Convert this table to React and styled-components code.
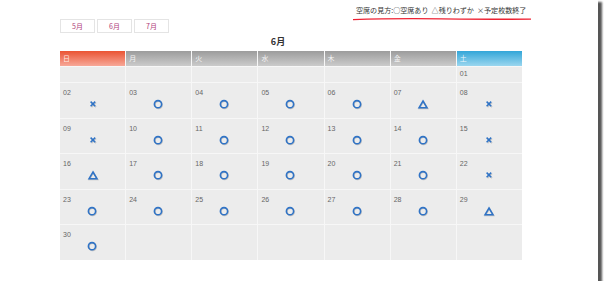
import React from 'react';
import styled, { createGlobalStyle } from 'styled-components';

const GlobalStyle = createGlobalStyle`
  html, body { margin: 0; padding: 0; background: #fff; }
  body { font-family: "Liberation Sans", "Noto Sans CJK JP", sans-serif; }
`;

// データ
const HEADERS = [
  { label: '日', kind: 'sun' },
  { label: '月', kind: 'week' },
  { label: '火', kind: 'week' },
  { label: '水', kind: 'week' },
  { label: '木', kind: 'week' },
  { label: '金', kind: 'week' },
  { label: '土', kind: 'sat' },
];

const STATUS = {
  1: null, 2: 'x', 3: 'o', 4: 'o', 5: 'o', 6: 'o', 7: 't', 8: 'x',
  9: 'x', 10: 'o', 11: 'o', 12: 'o', 13: 'o', 14: 'o', 15: 'x',
  16: 't', 17: 'o', 18: 'o', 19: 'o', 20: 'o', 21: 'o', 22: 'x',
  23: 'o', 24: 'o', 25: 'o', 26: 'o', 27: 'o', 28: 'o', 29: 't',
  30: 'o',
};

const buildCells = () => {
  const cells = [];
  for (let i = 0; i < 6; i++) cells.push(null);
  for (let d = 1; d <= 30; d++) cells.push(d);
  while (cells.length % 7) cells.push(null);
  return cells;
};

const Mark = ({ type }) => {
  if (type === 'o') {
    return (
      <svg width="11" height="11" viewBox="0 0 11 11">
        <circle cx="5.6" cy="5.8" r="3.6" fill="none" stroke="rgba(0,0,0,0.18)" strokeWidth="1.6" />
        <circle cx="5" cy="5.2" r="3.6" fill="none" stroke="#2f73c6" strokeWidth="1.6" />
      </svg>
    );
  }
  if (type === 't') {
    return (
      <svg width="12" height="11" viewBox="0 0 12 11">
        <path d="M6.5 2.6 L10.6 9.4 L2.4 9.4 Z" fill="none" stroke="rgba(0,0,0,0.18)" strokeWidth="1.5" />
        <path d="M6 2 L10 8.8 L2 8.8 Z" fill="none" stroke="#2f73c6" strokeWidth="1.5" strokeLinejoin="miter" />
      </svg>
    );
  }
  return (
    <svg width="10" height="10" viewBox="0 0 10 10">
      <path d="M3 3 L7.6 7.6 M7.6 3 L3 7.6" stroke="rgba(0,0,0,0.15)" strokeWidth="1.5" transform="translate(0.5 0.5)" />
      <path d="M2.6 2.6 L7.2 7.2 M7.2 2.6 L2.6 7.2" stroke="#2f73c6" strokeWidth="1.5" />
    </svg>
  );
};

export default function App() {
  const cells = buildCells();
  const weeks = [];
  for (let i = 0; i < cells.length; i += 7) weeks.push(cells.slice(i, i + 7));

  return (
    <>
      <GlobalStyle />
      <Frame>
        <TopBar>
          <MonthTabs>
            <MonthTab>5月</MonthTab>
            <MonthTab>6月</MonthTab>
            <MonthTab>7月</MonthTab>
          </MonthTabs>
          <Legend>
            <LegendText>空席の見方:○空席あり&nbsp;&nbsp;△残りわずか&nbsp;&nbsp;×予定枚数終了</LegendText>
            <RedLine viewBox="0 0 180 4" preserveAspectRatio="none">
              <path d="M0 2.6 Q 40 1.2 90 1.8 T 180 2.2" fill="none" stroke="#ee2233" strokeWidth="1.3" />
            </RedLine>
          </Legend>
        </TopBar>

        <Title>6月</Title>

        <Calendar>
          {HEADERS.map((h) => (
            <HeadCell key={h.label} $kind={h.kind}>{h.label}</HeadCell>
          ))}
          {weeks.map((week, wi) =>
            week.map((d, di) => (
              <DayCell key={`${wi}-${di}`} $first={wi === 0}>
                {d && <DayNum>{String(d).padStart(2, '0')}</DayNum>}
                {d && STATUS[d] && (
                  <MarkWrap>
                    <Mark type={STATUS[d]} />
                  </MarkWrap>
                )}
              </DayCell>
            ))
          )}
        </Calendar>
      </Frame>
    </>
  );
}

// Estilos
const Frame = styled.div`
  width: 598px;
  height: 281px;
  background: #fff;
  box-shadow: 3px 3px 2px 1px #555;
  position: relative;
  box-sizing: border-box;
  padding-left: 60px;
  padding-top: 5px;
`;

const TopBar = styled.div`
  display: flex;
  justify-content: space-between;
  width: 471px;
`;

const MonthTabs = styled.div`
  display: flex;
  gap: 2px;
  margin-top: 14px;
`;

const MonthTab = styled.div`
  width: 33px;
  height: 12px;
  border: 1px solid #e4e4e4;
  display: flex;
  align-items: center;
  justify-content: center;
  font-size: 7px;
  color: #b04078;
  font-family: "Noto Sans CJK JP", sans-serif;
`;

const Legend = styled.div`
  display: flex;
  flex-direction: column;
  align-items: stretch;
  width: 178px;
`;

const LegendText = styled.div`
  font-family: "Noto Sans CJK JP", sans-serif;
  font-size: 7.05px;
  color: #333;
  line-height: 10px;
  padding-left: 3px;
  white-space: nowrap;
`;

const RedLine = styled.svg`
  width: 178px;
  height: 4px;
  margin-top: 2px;
`;

const Title = styled.div`
  width: 462px;
  text-align: center;
  padding-right: 26px;
  box-sizing: border-box;
  font-family: "Noto Sans CJK JP", sans-serif;
  font-weight: bold;
  font-size: 9px;
  color: #333;
  line-height: 12px;
  margin-top: 3px;
`;

const Calendar = styled.div`
  display: grid;
  grid-template-columns: repeat(7, 1fr);
  grid-template-rows: 15px 15px repeat(5, 34.6px);
  column-gap: 1px;
  row-gap: 1px;
  width: 462px;
  margin-top: 3px;
  background: #f7f7f7;
`;

const headBg = {
  sun: 'linear-gradient(#ea5433, #f7a898)',
  week: 'linear-gradient(#9c9c9c, #cbcbcb)',
  sat: 'linear-gradient(#33a6d8, #9ad6ef)',
};

const HeadCell = styled.div`
  background: ${(p) => headBg[p.$kind]};
  color: rgba(255, 255, 255, 0.85);
  font-family: "Noto Sans CJK JP", sans-serif;
  font-size: 7px;
  line-height: 15px;
  padding-left: 3px;
`;

const DayCell = styled.div`
  background: #ececec;
  display: flex;
  flex-direction: column;
  padding: ${(p) => (p.$first ? '3px' : '6px')} 0 0 3px;
  box-sizing: border-box;
`;

const DayNum = styled.div`
  font-family: "Liberation Sans", sans-serif;
  font-size: 7px;
  color: #666;
  line-height: 8px;
`;

const MarkWrap = styled.div`
  display: flex;
  justify-content: center;
  margin-top: 2px;
  padding-right: 3px;
`;
